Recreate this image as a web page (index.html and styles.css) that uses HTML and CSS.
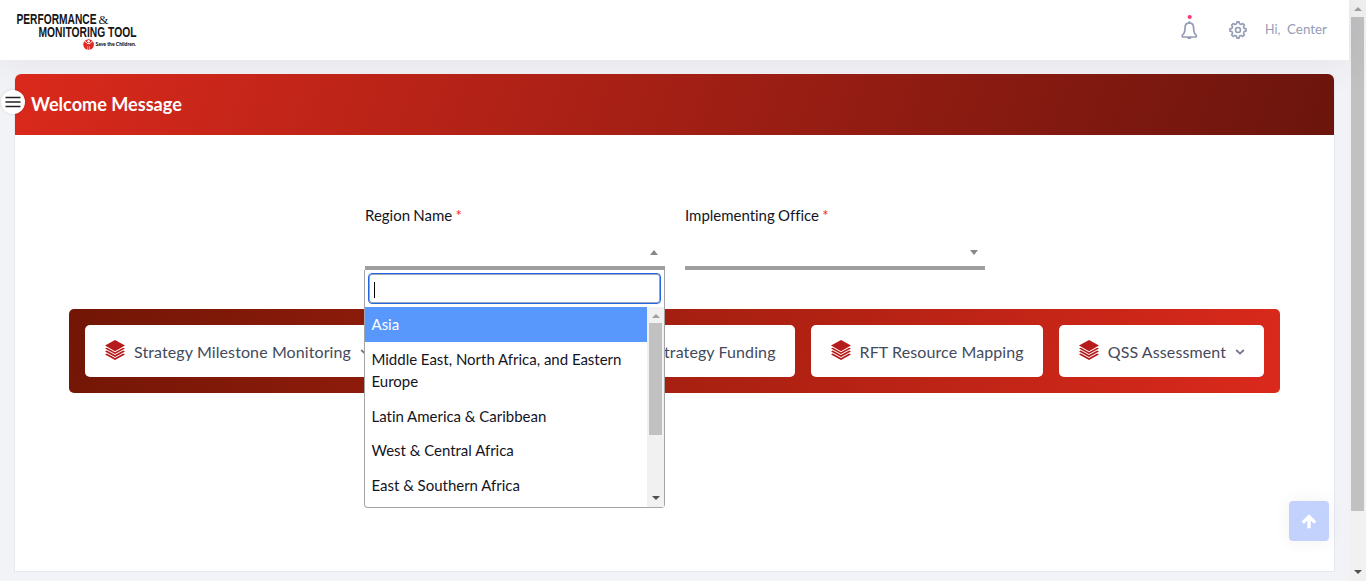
FILE: index.html
```html
<!DOCTYPE html>
<html lang="en">
<head>
<meta charset="utf-8">
<title>Performance &amp; Monitoring Tool</title>
<link rel="stylesheet" href="styles.css">
</head>
<body>
<svg class="defs" width="0" height="0">
  <symbol id="layers" viewBox="0 0 20 20">
    <path d="M10 0 20 5.600 10 11.200 0 5.600Z"/>
    <path d="M0 8.600 1.800 7.700 10 12.200 18.200 7.700 20 8.600 10 14.100Z"/>
    <path d="M0 11.500 1.800 10.600 10 15.100 18.200 10.600 20 11.500 10 17Z"/>
    <path d="M0 14.400 1.800 13.500 10 17.900 18.200 13.500 20 14.400 10 19.900Z"/>
  </symbol>
  <symbol id="chevron" viewBox="0 0 10 8">
    <path d="M1.200 2 5 5.600 8.800 2" fill="none" stroke="#71758a" stroke-width="1.800"/>
  </symbol>
</svg>
<div class="page">
  <div class="content">
    <header class="topbar">
      <svg class="logo" width="140" height="60" viewBox="0 0 140 60">
        <text class="logo-name" x="16.500" y="24.300" textLength="80" lengthAdjust="spacingAndGlyphs">PERFORMANCE</text>
        <text class="logo-amp" x="98.500" y="24" textLength="10" lengthAdjust="spacingAndGlyphs">&amp;</text>
        <text class="logo-name" x="38.500" y="37.300" textLength="98" lengthAdjust="spacingAndGlyphs">MONITORING TOOL</text>
        <circle cx="88.600" cy="44.500" r="5.300" fill="#dc2b24"/>
        <circle cx="88.600" cy="41.300" r="1.200" fill="#fff"/>
        <path d="M84.600 40.800 87.300 43.600H89.900L92.600 40.800" fill="none" stroke="#fff" stroke-width="1"/>
        <path d="M87.700 46.200V49.800M89.500 46.200V49.800" fill="none" stroke="#fff" stroke-width=".5"/>
        <text class="logo-org" x="95.500" y="46.300" textLength="40.500" lengthAdjust="spacingAndGlyphs">Save the Children.</text>
      </svg>
      <div class="tools">
        <svg class="bell" width="18" height="26" viewBox="0 0 18 26">
          <circle cx="9.700" cy="3" r="2.100" fill="#fd397a"/>
          <path d="M9.300 7.300V8.800M9.300 8.800C6.300 8.900 5 11.200 5 14C5 18 4.200 19.800 2.400 21.200C1.800 22.600 2.400 23 3.600 23H15C16.200 23 16.800 22.600 16.200 21.200C14.400 19.800 13.600 18 13.600 14C13.600 11.200 12.300 8.900 9.300 8.800ZM7.600 23.600Q9.300 24.900 11 23.600" fill="none" stroke="#959cb6" stroke-width="1.700"/>
        </svg>
        <svg class="gear" width="18" height="18" viewBox="0 0 18 18" fill="none" stroke="#959cb6" stroke-width="1.600" stroke-linejoin="round">
          <path d="M7.500 2.800 7.900 .9H10.100L10.500 2.800 12.100 3.500 13.800 2.500 15.400 4.100 14.400 5.800 15.100 7.400 17.100 7.900V10.100L15.100 10.500 14.400 12.200 15.400 13.900 13.800 15.500 12.100 14.400 10.500 15.100 10.100 17.100H7.900L7.500 15.100 5.900 14.400 4.200 15.500 2.600 13.900 3.600 12.200 2.900 10.500 .9 10.100V7.900L2.900 7.400 3.600 5.800 2.600 4.100 4.200 2.500 5.900 3.500Z"/>
          <circle cx="9" cy="9" r="2.500"/>
        </svg>
        <span class="hi">Hi,</span><span class="user">Center</span>
      </div>
    </header>
    <main class="card">
      <h1 class="card-head">Welcome Message</h1>
      <button class="menu-toggle" aria-label="Menu"><svg width="16" height="12" viewBox="0 0 16 12"><path d="M.5 1.500H15.500M.5 6H15.500M.5 10.500H15.500" stroke="#222" stroke-width="1.400"/></svg></button>
      <div class="fields">
        <div class="field">
          <label>Region Name <b>*</b></label>
          <div class="select"><i class="caret up"></i></div>
          <div class="dropdown">
            <div class="search"><i></i></div>
            <div class="results">
              <ul>
                <li class="active">Asia</li>
                <li>Middle East, North Africa, and Eastern Europe</li>
                <li>Latin America &amp; Caribbean</li>
                <li>West &amp; Central Africa</li>
                <li>East &amp; Southern Africa</li>
              </ul>
              <div class="list-scroll"><i class="arrow up"></i><i class="thumb"></i><i class="arrow down"></i></div>
            </div>
          </div>
        </div>
        <div class="field">
          <label>Implementing Office <b>*</b></label>
          <div class="select"><i class="caret down"></i></div>
        </div>
      </div>
      <nav class="strip">
        <a class="tile"><svg class="stack"><use href="#layers"/></svg>Strategy Milestone Monitoring<svg class="chev"><use href="#chevron"/></svg></a>
        <a class="tile push"><svg class="stack"><use href="#layers"/></svg>Strategy Funding</a>
        <a class="tile"><svg class="stack"><use href="#layers"/></svg>RFT Resource Mapping</a>
        <a class="tile"><svg class="stack"><use href="#layers"/></svg>QSS Assessment<svg class="chev"><use href="#chevron"/></svg></a>
      </nav>
    </main>
    <button class="to-top" aria-label="Back to top">
      <svg width="16" height="16" viewBox="0 0 16 16"><path d="M8 14.200V3M1.800 8.600 8 2.600 14.200 8.600" fill="none" stroke="#fff" stroke-width="3.400"/></svg>
    </button>
  </div>
  <div class="page-scroll"><i class="arrow up"></i><i class="thumb"></i><i class="arrow down"></i></div>
</div>
</body>
</html>
```

FILE: styles.css
```css
* { box-sizing: border-box; }
body { margin: 0; font-family: Lato, sans-serif; font-variant-ligatures: none; color: #14141f; }
.defs { position: absolute; }
.page { display: flex; height: 581px; overflow: hidden; }
.content { position: relative; flex: 1; background: #f2f3f6; }
.topbar {
  display: flex; justify-content: space-between; height: 60px;
  background: #fff; box-shadow: 0 0 40px rgba(82, 63, 105, .1);
}
.logo-name { font: bold 14.5px "Liberation Sans", sans-serif; fill: #161616; }
.logo-amp { font: 13px "Liberation Serif", serif; fill: #161616; }
.logo-org { font: 900 5.6px Lato, sans-serif; fill: #111; }
.tools { display: flex; align-items: center; padding-right: 22px; color: #959cb6; }
.bell { margin: -6px 31px 0 0; }
.gear { margin-right: 18px; }
.hi { width: 22px; margin-top: -1px; font-size: 12.5px; }
.user { width: 40px; margin-top: -3px; font-size: 13.4px; white-space: nowrap; }
.card {
  position: relative; width: 1321px; height: 498px; margin: 14px 0 0 14px;
  background: #fff; border: 1px solid #e7e8ef; border-top: 0; border-radius: 6px 6px 0 0;
}
.card-head {
  height: 61px; margin: 0; padding-left: 16px; border-radius: 6px 6px 0 0;
  font-size: 18.1px; line-height: 61px; color: #fff;
  background: linear-gradient(110deg, #da291c, #6b150d);
}
.menu-toggle {
  position: absolute; left: -14px; top: 16px; width: 24px; height: 24px;
  display: flex; align-items: center; justify-content: center;
  padding: 0; border: 0; border-radius: 50%; background: #fff; box-shadow: 0 0 3px rgba(0, 0, 0, .15);
}
.fields { display: flex; gap: 20px; padding: 69px 0 0 350px; height: 174px; }
.field { position: relative; width: 300px; font-size: 15px; }
.field label { display: block; height: 33px; line-height: 22px; letter-spacing: -.02px; word-spacing: -.5px; }
.field b { color: #f22; font-weight: 400; }
.select { display: flex; justify-content: flex-end; height: 33px; padding: 13px 7px 0 0; border-bottom: 4px solid #9e9e9e; }
.caret { width: 0; height: 0; border: 4px solid transparent; }
.caret.up { border-top: 0; border-bottom: 5px solid #888; }
.caret.down { border-bottom: 0; border-top: 5px solid #888; }
.dropdown {
  position: absolute; z-index: 2; left: -1px; top: 66px; width: 301px; height: 238px;
  padding-top: 3px; background: #fff; border: 1px solid #a5a5a5; border-top: 0; border-radius: 0 0 4px 4px;
}
.search {
  height: 31px; margin: 0 3px 3px; padding: 8px 0 0 5px;
  border: 1px solid #2466df; border-radius: 4px; box-shadow: inset 0 0 0 1px #9ba6bd;
}
.search i { display: block; width: 1px; height: 16px; background: #000; }
.results { display: flex; height: 200px; overflow: hidden; }
.results ul { flex: 1; margin: 0; padding: 0; list-style: none; }
.results li { padding: 6px 6.5px; line-height: 22.5px; letter-spacing: -.02px; }
.results li.active { background: #5897fb; color: #fff; }
.list-scroll, .page-scroll { display: flex; flex-direction: column; align-items: center; width: 17px; background: #f1f1f1; }
.arrow { width: 0; height: 0; border: 4px solid transparent; }
.arrow.up { border-top: 0; border-bottom-color: #a0a0a0; margin: 7px 0 5px; }
.arrow.down { border-bottom: 0; border-top-color: #505050; margin: auto 0 7px; }
.thumb { width: 13px; background: #c1c1c1; }
.list-scroll .thumb { height: 112px; }
.page-scroll .thumb { height: 494px; margin-top: 1px; }
.strip {
  display: flex; gap: 16px; width: 1211px; height: 84px; margin-left: 54px; padding: 16px; border-radius: 5px;
  background: linear-gradient(110deg, #721605, #da291c);
}
.tile {
  display: flex; align-items: center; height: 52px; padding: 1px 19px 0 20px;
  background: #fff; border-radius: 5px; color: #444a5c; font-size: 16px; letter-spacing: .1px; white-space: nowrap;
}
.push { margin-left: auto; }
.stack { width: 20px; height: 20px; margin: -3px 9px 0 0; fill: #b71c1c; }
.chev { width: 10px; height: 8px; margin-left: 9px; }
.to-top {
  position: absolute; right: 20px; top: 501px; width: 40px; height: 40px; padding: 5px 0 0;
  border: 0; border-radius: 4px; background: #c2d2fc; box-shadow: 0 0 15px rgba(82, 63, 105, .08);
}
```
